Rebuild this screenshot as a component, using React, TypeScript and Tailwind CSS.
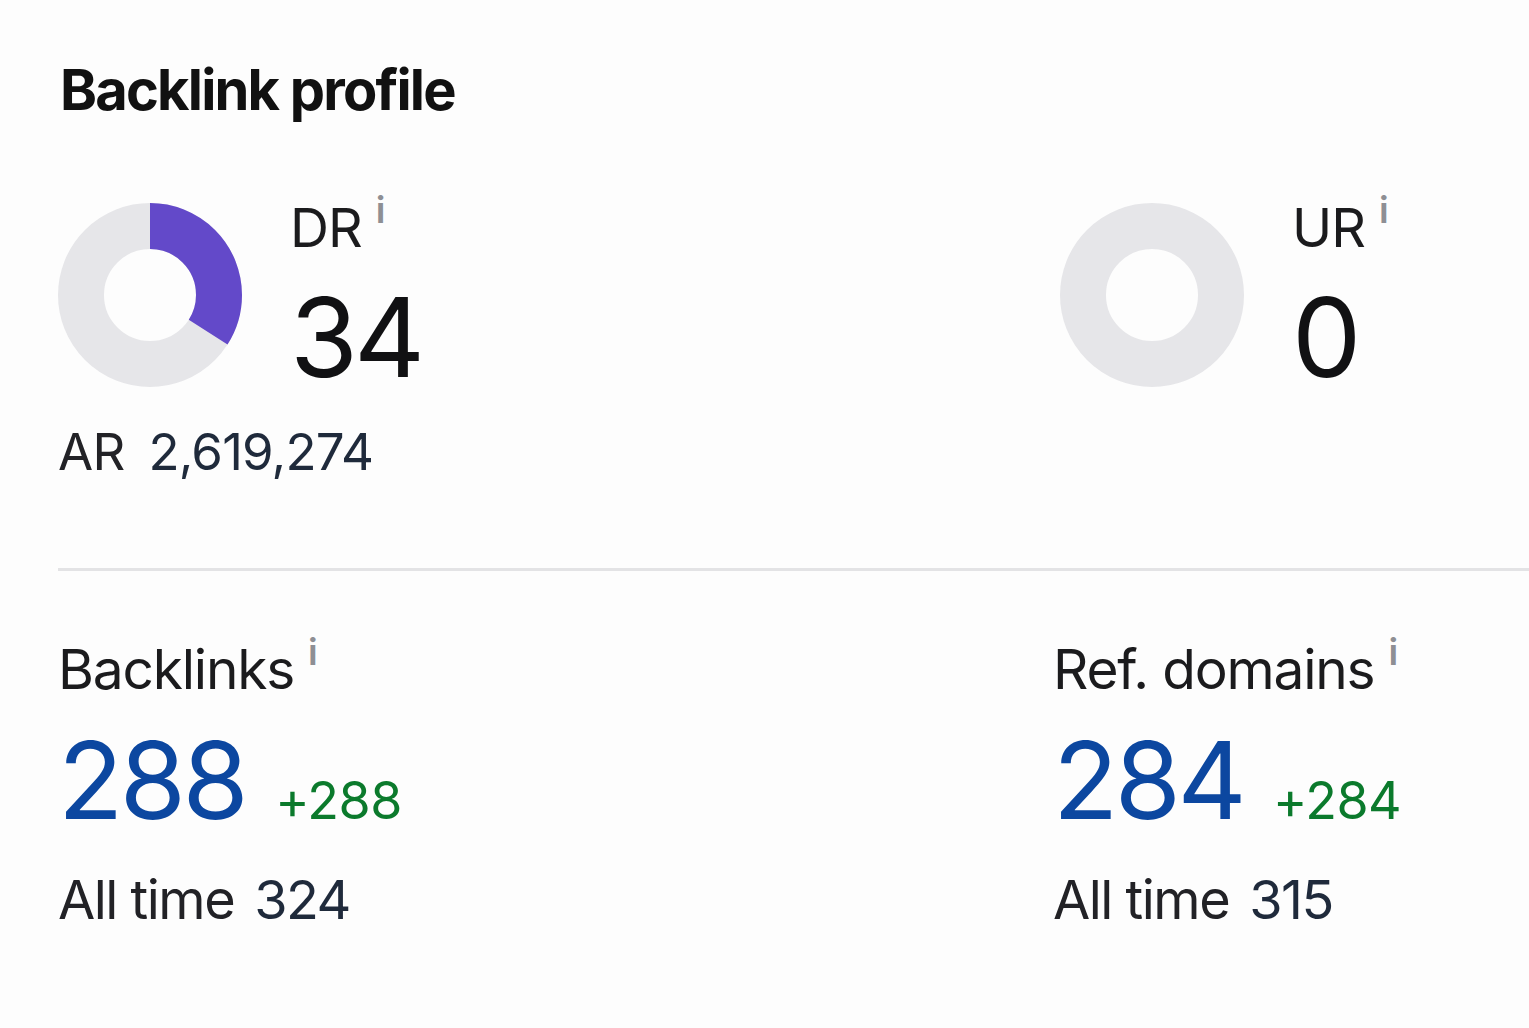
import React from 'react';

const font = { fontFamily: 'Inter, "Noto Sans", sans-serif' };

function Donut({ value }: { value: number }) {
  const r = 69;
  const c = 2 * Math.PI * r;
  const len = (value / 100) * c;
  return (
    <svg width="184" height="184" viewBox="0 0 184 184" className="shrink-0">
      <circle cx="92" cy="92" r={r} fill="none" stroke="#e6e6e9" strokeWidth="46" />
      {value > 0 && (
        <circle
          cx="92"
          cy="92"
          r={r}
          fill="none"
          stroke="#6349c9"
          strokeWidth="46"
          strokeDasharray={`${len} ${c}`}
          transform="rotate(-90 92 92)"
        />
      )}
    </svg>
  );
}

function Info({ className = '' }: { className?: string }) {
  return <span className={`text-[37px] leading-none text-[#8e8f94] font-semibold ${className}`}>i</span>;
}

function Rating({ label, value, pct, shift = '' }: { label: string; value: string; pct: number; shift?: string }) {
  return (
    <div className="flex items-start gap-[48px]">
      <div className={`mt-[2px] ${shift}`}>
        <Donut value={pct} />
      </div>
      <div className="flex flex-col">
        <div className="flex items-start">
          <span className="text-[54px] leading-none text-[#1b1b1d] tracking-[-1px]">{label}</span>
          <Info className="ml-[14px] -mt-[10px]" />
        </div>
        <div className="mt-[27px] text-[110px] leading-none text-[#111113] tracking-[-4px]">{value}</div>
      </div>
    </div>
  );
}

function Metric({ label, value, delta, allTime }: { label: string; value: string; delta: string; allTime: string }) {
  return (
    <div className="flex flex-col">
      <div className="flex items-start">
        <span className="text-[55px] leading-none text-[#1b1b1d] tracking-[-1.2px]">{label}</span>
        <Info className="ml-[14px] -mt-[9px]" />
      </div>
      <div className="mt-[30px] flex items-baseline gap-[30px]">
        <span className="text-[107px] leading-none text-[#0c47a0] tracking-[-3.5px]">{value}</span>
        <span className="text-[52px] leading-none text-[#0b7a2c] tracking-[-0.5px]">{delta}</span>
      </div>
      <div className="mt-[39px] flex items-baseline gap-[20px] text-[54px] leading-none tracking-[-1.5px]">
        <span className="text-[#222226]">All time</span>
        <span className="text-[#1f2a3b]">{allTime}</span>
      </div>
    </div>
  );
}

export default function App() {
  return (
    <div className="min-h-[1028px] w-full overflow-hidden bg-[#fdfdfd] pl-[58px] pt-[62px]" style={font}>
      <h1 className="text-[56px] leading-none font-bold text-[#111] tracking-[-1.8px] ml-[2px]">Backlink profile</h1>

      <div className="mt-[83px] flex">
        <div className="w-[995px] shrink-0">
          <Rating label="DR" value="34" pct={34} />
          <div className="mt-[34px] flex items-baseline gap-[24px] text-[51px] leading-none tracking-[-0.8px]">
            <span className="text-[#222226]">AR</span>
            <span className="text-[#1f2a3b]">2,619,274</span>
          </div>
        </div>
        <div className="shrink-0">
          <Rating label="UR" value="0" pct={0} shift="ml-[7px]" />
        </div>
      </div>

      <div className="mt-[91px] h-[3px] bg-[#e3e3e5]" />

      <div className="mt-[71px] flex">
        <div className="w-[995px] shrink-0">
          <Metric label="Backlinks" value="288" delta="+288" allTime="324" />
        </div>
        <div className="shrink-0">
          <Metric label="Ref. domains" value="284" delta="+284" allTime="315" />
        </div>
      </div>
    </div>
  );
}
